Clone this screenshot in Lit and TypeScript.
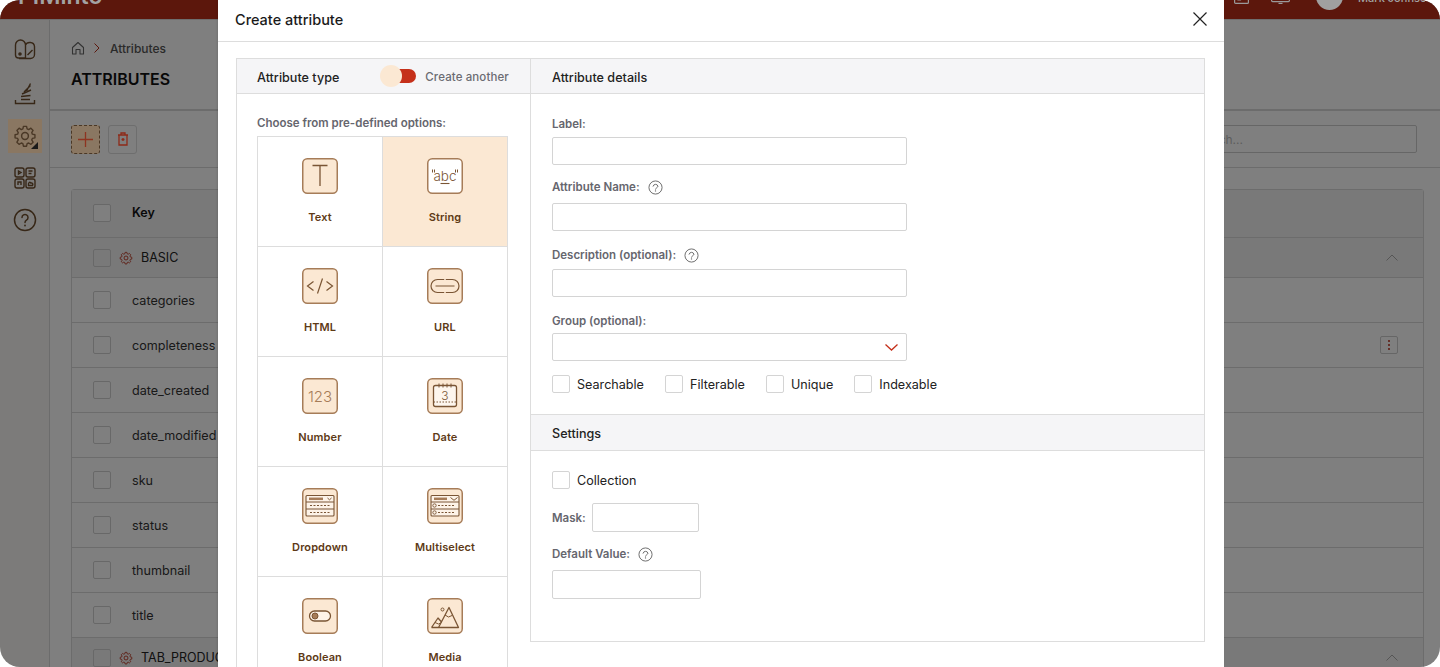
import { LitElement, html, css, svg } from "lit";
import { customElement } from "lit/decorators.js";

const S = "#a67c58";
const D = "#7a5534";
const SIDE = "#4a3826";

const gear = (size: number, color: string) => html`<svg width=${size} height=${size} viewBox="0 0 24 24" fill="none" stroke=${color} stroke-width="1.5" stroke-linejoin="round"><path d="M10.3 2.5h3.4l.6 2.8 1.7.7 2.4-1.5 2.4 2.4-1.5 2.4.7 1.7 2.8.6v3.4l-2.8.6-.7 1.7 1.5 2.4-2.4 2.4-2.4-1.5-1.7.7-.6 2.8h-3.4l-.6-2.8-1.7-.7-2.4 1.5-2.4-2.4 1.5-2.4-.7-1.7-2.8-.6v-3.4l2.8-.6.7-1.7-1.5-2.4 2.4-2.4 2.4 1.5 1.7-.7z" transform="translate(12 12) scale(.92) translate(-12 -13)"/><circle cx="12" cy="12" r="3.4"/></svg>`;

const help = html`<svg class="help" width="15" height="15" viewBox="0 0 16 16" fill="none" stroke="#666" stroke-width="1"><circle cx="8" cy="8" r="7"/><path d="M5.400 6.600a2.700 2.700 0 0 1 5.200 0c0 1.500-2.600 1.700-2.600 3.200" stroke-linecap="round"/><circle cx="8" cy="11.600" r=".7" fill="#666" stroke="none"/></svg>`;

const tileIcons: Record<string, unknown> = {
  text: svg`<path d="M10.500 7.500h15M18 7.500V28" stroke=${D} stroke-width="1.300" fill="none"/>`,
  string: svg`<path d="M5.500 11.500v3M7.500 11.500v3M28.500 11.500v3M30.500 11.500v3" stroke=${D} stroke-width="1"/><text x="18" y="22.500" text-anchor="middle" font-family="Inter, sans-serif" font-size="13.500" font-weight="300" fill=${D}>abc</text><path d="M13.500 25.500h9" stroke=${D} stroke-width="1.100"/>`,
  html: svg`<path d="M11.500 13.500 5.500 18l6 4.500M24.500 13.500l6 4.500-6 4.500M20.500 10.500 15.500 25.500" stroke=${D} stroke-width="1.200" fill="none"/>`,
  url: svg`<path d="M17.200 11.500H10.500a6.500 6.500 0 0 0 0 13h6.700M18.800 11.500h6.700a6.500 6.500 0 0 1 0 13h-6.700M8.500 18h19" stroke=${D} stroke-width="1.200" fill="none"/>`,
  number: svg`<text x="18" y="23.500" text-anchor="middle" font-family="Inter, sans-serif" font-size="15" font-weight="300" fill=${S}>123</text>`,
  date: svg`<rect x="6.500" y="7.500" width="23" height="21" rx="2" fill="#fdf6ee" stroke=${D} stroke-width="1.300"/><path d="M12 5.500v4M16 5.500v4M20 5.500v4M24 5.500v4" stroke=${D} stroke-width="1"/><path d="M6.500 24h23" stroke=${D} stroke-width="1" stroke-dasharray="1.500 1.500"/><text x="18" y="22" text-anchor="middle" font-family="Inter, sans-serif" font-size="12" font-weight="300" fill=${D}>3</text>`,
  dropdown: svg`<rect x="4" y="7.500" width="28" height="20.500" rx="1" fill="#fdf3e8" stroke=${D} stroke-width="1.100"/><path d="M4 14h28M4 21h28" stroke=${D}/><path d="M7 10.800h14" stroke=${S} stroke-width="2.500"/><path d="M25.500 10l2 1.800 2-1.800" stroke=${D} fill="none"/><path d="M8 17.500h20M8 24.500h20" stroke=${D} stroke-width="1" stroke-dasharray="2 1.500"/>`,
  multi: svg`<rect x="4" y="7.500" width="28" height="20.500" rx="1" fill="#fdf3e8" stroke=${D} stroke-width="1.100"/><path d="M4 14h28M4 21h28" stroke=${D}/><path d="M7 10.800h13" stroke=${S} stroke-width="2.500"/><path d="M23.500 9.500l3.500 2.800 3.500-2.800" stroke=${D} fill="none"/><circle cx="7.500" cy="17.500" r="1.700" fill="none" stroke=${D} stroke-width=".9"/><circle cx="7.500" cy="24.500" r="1.700" fill="none" stroke=${D} stroke-width=".9"/><path d="M11 17.500h17M11 24.500h17" stroke=${D} stroke-width="1" stroke-dasharray="2 1.500"/>`,
  boolean: svg`<rect x="7.500" y="13" width="21" height="10" rx="5" fill="#fdf3e8" stroke=${D} stroke-width="1.300"/><circle cx="13" cy="18" r="3" fill=${S} stroke=${D} stroke-width="1"/>`,
  media: svg`<path d="M4.500 29.500l6.500-9.500 3.500 4M11.500 29.500 22 9.500l9.500 20zM4.500 29.500h27" stroke=${D} stroke-width="1.300" fill="none" stroke-linejoin="round"/><path d="M18 17l3.500 2 3.500-1.500M8 24.500l3.500 1.500 3-1.500" stroke=${D} stroke-width="1" fill="none"/><circle cx="15.500" cy="11.500" r="1.500" fill="none" stroke=${D} stroke-width="1"/>`,
};

const tiles = [
  ["text", "Text"], ["string", "String"],
  ["html", "HTML"], ["url", "URL"],
  ["number", "Number"], ["date", "Date"],
  ["dropdown", "Dropdown"], ["multi", "Multiselect"],
  ["boolean", "Boolean"], ["media", "Media"],
];

const rows = [
  ["BASIC", true], ["categories", false], ["completeness", false], ["date_created", false],
  ["date_modified", false], ["sku", false], ["status", false], ["thumbnail", false],
  ["title", false], ["TAB_PRODUCT", true],
] as [string, boolean][];

@customElement("app-root")
export class AppRoot extends LitElement {
  static styles = css`
    :host { display: block; width: 1440px; height: 667px; position: relative; overflow: hidden; background: #fff; font-family: Inter, "Liberation Sans", sans-serif; color: #111; }
    svg { display: block; flex: none; }
    .frame { position: absolute; inset: 0; border-radius: 20px; overflow: hidden; background: #fff; display: flex; flex-direction: column; }
    .overlay { position: absolute; inset: 0; background: rgba(0,0,0,.5); }
    .topbar { flex: none; height: 60px; margin-top: -40px; background: #5c170c; border-bottom: 1px solid #6e6e6e; box-sizing: border-box; color: #a3a3a3; display: flex; align-items: flex-end; padding: 0 15px 0 18px; position: relative; z-index: 1; }
    .logo { font-size: 23px; line-height: 23px; font-weight: 600; margin-bottom: 11px; }
    .topright { margin-left: auto; display: flex; align-items: flex-end; }
    .ticon { margin-bottom: 15px; }
    .ticon.a { margin-right: 22px; }
    .ticon.b { margin-right: 26px; }
    .avatar { width: 27px; height: 27px; border-radius: 50%; background: #a0a0a0; margin: 0 15px 9px 0; }
    .uname { font-size: 11px; line-height: 14px; font-weight: 500; margin-bottom: 14px; width: 67px; white-space: nowrap; overflow: hidden; }
    .under { flex: 1; display: flex; min-height: 0; }
    .side { width: 50px; flex: none; box-sizing: border-box; border-right: 1px solid #d8d8d8; background: #f8f7f4; display: flex; flex-direction: column; align-items: center; padding-top: 13px; }
    .sitem { width: 34px; height: 34px; display: flex; align-items: center; justify-content: center; margin-bottom: 8px; position: relative; }
    .sitem:first-child { margin-bottom: 10px; }
    .sitem.on { background: #8a7762; z-index: 1; }
    .corner { position: absolute; right: 4px; bottom: 4px; width: 0; height: 0; border-left: 7px solid transparent; border-bottom: 7px solid #1a1a1a; }
    .main { flex: 1; min-width: 0; display: flex; flex-direction: column; background: #fff; }
    .head { height: 91px; flex: none; box-sizing: border-box; border-bottom: 2px solid #d8d8d8; padding: 20px 21px 0; }
    .crumb { display: flex; align-items: center; font-size: 12px; font-weight: 500; color: #555; height: 16px; }
    .crumb svg:nth-child(2) { margin: 0 10px 0 9px; }
    .title { font-size: 16px; font-weight: 600; margin-top: 13px; color: #111; }
    .tools { height: 57px; flex: none; box-sizing: border-box; border-bottom: 1px solid #d8d8d8; display: flex; align-items: center; padding: 0 23px 0 21px; }
    .tbtn { width: 29px; height: 29px; box-sizing: border-box; border: 1px solid #6e6e6e; border-radius: 3px; display: flex; align-items: center; justify-content: center; margin-right: 8px; position: relative; z-index: 1; }
    .tbtn.add { border: 1px dashed #4a3826; background: #8a7762; }
    .search { margin-left: auto; width: 700px; height: 28px; box-sizing: border-box; border: 1px solid #ccc; border-radius: 2px; display: flex; align-items: center; justify-content: flex-end; font-size: 12px; color: #bbb; }
    .search span { margin-right: 173px; }
    .table { margin: 21px 16px 0 21px; border: 1px solid #d8d8d8; border-radius: 3px 3px 0 0; }
    .row { height: 45px; box-sizing: border-box; border-bottom: 1px solid #d8d8d8; display: flex; align-items: center; font-size: 12.600px; color: #333; padding-left: 21px; position: relative; }
    .row.hd { height: 48px; background: #f2f2f3; font-weight: 600; color: #111; font-size: 12.500px; padding-bottom: 2px; }
    .row.grp { height: 40px; background: #f2f2f3; color: #222; font-size: 12.500px; }
    .row.grp:last-child { height: 45px; padding-bottom: 5px; }
    .cb { width: 18px; height: 18px; box-sizing: border-box; border: 1px solid #d0d0d0; border-radius: 2px; background: #fff; flex: none; margin-right: 21px; }
    .row.grp .cb { margin-right: 8px; background: transparent; }
    .row.grp svg { margin-right: 8px; }
    .row.grp svg.chev { margin-right: 0; }
    .chev { position: absolute; right: 25px; }
    .keb { position: absolute; right: 25px; width: 18px; height: 18px; box-sizing: border-box; border: 1px solid #ccc; border-radius: 2px; display: flex; align-items: center; justify-content: center; }

    .modal { position: absolute; z-index: 2; left: 218px; top: 0; width: 1006px; height: 667px; background: #fff; overflow: hidden; display: flex; flex-direction: column; box-shadow: -1px 0 2px rgba(0,0,0,.1); }
    .mhead { height: 42px; flex: none; box-sizing: border-box; border-bottom: 1px solid #ddd; display: flex; align-items: center; justify-content: space-between; padding: 0 17px 3px; font-size: 14.500px; font-weight: 500; color: #1a1a1a; }
    .panel { margin: 16px 0 0 18px; width: 969px; display: flex; flex: 1; min-height: 0; border-top: 1px solid #ddd; box-sizing: border-box; }
    .left { width: 294px; flex: none; border-left: 1px solid #ddd; box-sizing: border-box; }
    .right { width: 675px; flex: none; border-left: 1px solid #ddd; border-right: 1px solid #ddd; border-bottom: 1px solid #ddd; height: 583px; box-sizing: border-box; }
    .bar { height: 35px; box-sizing: border-box; background: #f5f5f7; border-bottom: 1px solid #ddd; display: flex; align-items: center; font-size: 12.600px; font-weight: 500; color: #222; padding: 2px 0 0 21px; }
    .left .bar { padding-left: 20px; justify-content: flex-start; }
    .toggle { display: flex; align-items: center; margin: -2px 0 0 41px; }
    .knob { width: 22px; height: 22px; border-radius: 50%; background: #fbe8d3; position: relative; z-index: 1; }
    .track { width: 19px; height: 14px; background: #c5301a; border-radius: 0 7px 7px 0; margin-left: -5px; }
    .another { margin-left: 9px; font-size: 11.500px; font-weight: 500; color: #6b6b72; letter-spacing: .1px; white-space: nowrap; }
    .choose { font-size: 11.500px; font-weight: 600; color: #66666e; margin: 22px 0 6px 20px; line-height: 14px; }
    .grid { margin-left: 20px; width: 251px; display: grid; grid-template-columns: 125px 125px; border-left: 1px solid #ddd; border-top: 1px solid #ddd; box-sizing: border-box; }
    .cell { height: 110px; box-sizing: border-box; border-right: 1px solid #ddd; border-bottom: 1px solid #ddd; display: flex; flex-direction: column; align-items: center; padding-top: 21px; font-size: 11px; font-weight: 600; color: #5e3a16; }
    .cell.sel { background: #fbe8d3; }
    .tile { width: 36px; height: 36px; box-sizing: border-box; }
    .cell span { margin-top: 16px; line-height: 14px; letter-spacing: .1px; }
    .details { padding: 21px 21px 0; height: 320px; box-sizing: border-box; }
    .lab { display: flex; align-items: center; gap: 8px; font-size: 11.500px; font-weight: 600; color: #66666e; line-height: 14px; height: 16px; box-sizing: border-box; padding-top: 2px; }
    .lab.n, .mask .lab { padding-top: 0; }
    .inp { width: 355px; height: 28px; box-sizing: border-box; border: 1px solid #d4d4d4; border-radius: 2px; background: #fff; display: flex; align-items: center; justify-content: flex-end; padding-right: 8px; }
    .f1 { margin: 6px 0 14px; }
    .f2 { margin: 8px 0 15px; }
    .f3 { margin: 7px 0 15px; }
    .f4 { margin: 5px 0 14px; }
    .checks { display: flex; align-items: center; }
    .chk { display: flex; align-items: center; gap: 7px; font-size: 12.600px; color: #222; margin-right: 21px; line-height: 16px; }
    .chk span { padding-top: 2px; }
    .chk i { width: 18px; height: 18px; box-sizing: border-box; border: 1px solid #d4d4d4; border-radius: 2px; display: block; }
    .right .bar.s { border-top: 1px solid #ddd; height: 37px; }
    .settings { padding: 20px 21px 0; }
    .mask { display: flex; align-items: center; gap: 6px; margin: 14px 0 0; }
    .inp.m { width: 107px; height: 29px; }
    .lab.dv { margin-top: 13px; }
    .inp.d { width: 149px; height: 29px; margin-top: 9px; }
  `;

  render() {
    return html`
      <div class="frame">
        <div class="topbar">
          <span class="logo">PIMinto</span>
          <div class="topright">
            <svg class="ticon a" width="15" height="16" viewBox="0 0 15 16" fill="none" stroke="#9a9a9a" stroke-width="1.200"><rect x=".6" y=".6" width="13.800" height="14.800" rx="1"/><path d="M4 8v4h2.500V8M9 12V8"/></svg>
            <svg class="ticon b" width="19" height="16" viewBox="0 0 19 16" fill="none" stroke="#9a9a9a" stroke-width="1.200"><rect x=".6" y=".6" width="17.800" height="13" rx="1"/><path d="M7.500 15.400h4"/></svg>
            <span class="avatar"></span>
            <span class="uname">Mark Johnson</span>
          </div>
        </div>
        <div class="under">
          <div class="side">
            <div class="sitem"><svg width="24" height="24" viewBox="0 0 24 24" fill="none" stroke="#6f4e2e" stroke-width="1.400"><path d="M12.500 20H5.500a3 3 0 0 1-3-3V7a5 5 0 0 1 10 0zM12.500 7c1.500-3.500 8.500-3.500 9 1.500v8a4 4 0 0 1-4 4H6"/><circle cx="7" cy="16" r="1.100" fill="#6f4e2e"/><path d="M14.500 17l5-5"/></svg></div>
            <div class="sitem"><svg width="24" height="24" viewBox="0 0 24 24" fill="none" stroke="#6f4e2e" stroke-width="1.400"><path d="M2.500 18v3.500h19V18M8 17.500h9M8 14.500l9.500-1M9 12l9-4M11 10l6.500-6.500M13.500 9l4-7.500"/></svg></div>
            <div class="sitem on">${gear(24, SIDE)}<span class="corner"></span></div>
            <div class="sitem"><svg width="24" height="24" viewBox="0 0 24 24" fill="none" stroke="#6f4e2e" stroke-width="1.400"><rect x="2" y="2" width="9" height="9" rx="2"/><rect x="13" y="2" width="9" height="9" rx="2"/><rect x="2" y="13" width="9" height="9" rx="2"/><rect x="13" y="13" width="9" height="9" rx="2"/><path d="M5.500 5l2.500 1.500L5.500 8zM15.500 5h4M15.500 7.500h3M5 19v-3h3v3M15.500 19.500h4c1-1.500-.5-3-1.500-2.500-1-1.500-3-.5-2.500 2.500z"/></svg></div>
            <div class="sitem"><svg width="24" height="24" viewBox="0 0 24 24" fill="none" stroke="#6f4e2e" stroke-width="1.500"><circle cx="12" cy="12" r="10.500"/><path d="M9 9.500a3 3 0 1 1 4.500 2.600c-1 .6-1.500 1.200-1.500 2.400" stroke-linecap="round"/><circle cx="12" cy="17.500" r=".9" fill="#6f4e2e" stroke="none"/></svg></div>
          </div>
          <div class="main">
            <div class="head">
              <div class="crumb">
                <svg width="14" height="14" viewBox="0 0 14 14" fill="none" stroke="#666" stroke-width="1.100"><path d="M1.500 6.500 7 1.500l5.500 5V13H9V8.500H5V13H1.500z" stroke-linejoin="round"/></svg>
                <svg width="6" height="10" viewBox="0 0 6 10" fill="none" stroke="#b82e18" stroke-width="1"><path d="M.5.500 5 5 .5 9.500"/></svg>
                <span>Attributes</span>
              </div>
              <div class="title">ATTRIBUTES</div>
            </div>
            <div class="tools">
              <div class="tbtn add"><svg width="15" height="15" viewBox="0 0 15 15" stroke="#8e3420" stroke-width="1.300"><path d="M7.500 0v15M0 7.500h15"/></svg></div>
              <div class="tbtn"><svg width="12" height="14" viewBox="0 0 12 14" fill="none" stroke="#8e2a18" stroke-width="1.300"><path d="M1 3h10M4 3V1h4v2M2 3v10h8V3M4.500 7.500h3M6 6v3"/></svg></div>
              <div class="search"><span>Search...</span></div>
            </div>
            <div class="table">
              <div class="row hd"><span class="cb"></span>Key</div>
              ${rows.map(([n, g]) => html`
                <div class="row ${g ? "grp" : ""}">
                  <span class="cb"></span>
                  ${g ? gear(14, "#b82e18") : ""}
                  ${n}
                  ${g ? html`<svg class="chev" width="12" height="7" viewBox="0 0 12 7" fill="none" stroke="#aaa"><path d="M.5 6.500 6 1l5.500 5.500"/></svg>` : ""}
                  ${n === "completeness" ? html`<span class="keb"><svg width="2" height="10" viewBox="0 0 2 10" fill="#b82e18"><circle cx="1" cy="1" r="1"/><circle cx="1" cy="5" r="1"/><circle cx="1" cy="9" r="1"/></svg></span>` : ""}
                </div>`)}
            </div>
          </div>
        </div>
        <div class="overlay"></div>
      </div>

      <div class="modal">
        <div class="mhead">
          <span>Create attribute</span>
          <svg width="14" height="14" viewBox="0 0 14 14" stroke="#222" stroke-width="1.200"><path d="M.5.500l13 13M13.500.500l-13 13"/></svg>
        </div>
        <div class="panel">
          <div class="left">
            <div class="bar">
              <span>Attribute type</span>
              <span class="toggle"><span class="knob"></span><span class="track"></span></span>
              <span class="another">Create another</span>
            </div>
            <div class="choose">Choose from pre-defined options:</div>
            <div class="grid">
              ${tiles.map(([k, n]) => {
                const sel = k === "string";
                return html`<div class="cell ${sel ? "sel" : ""}">
                  <svg class="tile" viewBox="0 0 36 36" width="36" height="36"><rect x=".75" y=".75" width="34.500" height="34.500" rx="4.500" fill=${sel ? "#fff" : "#fbe8d3"} stroke=${S} stroke-width="1.500"/>${tileIcons[k]}</svg>
                  <span>${n}</span>
                </div>`;
              })}
            </div>
          </div>
          <div class="right">
            <div class="bar">Attribute details</div>
            <div class="details">
              <div class="lab">Label:</div>
              <div class="inp f1"></div>
              <div class="lab n">Attribute Name: ${help}</div>
              <div class="inp f2"></div>
              <div class="lab">Description (optional): ${help}</div>
              <div class="inp f3"></div>
              <div class="lab">Group (optional):</div>
              <div class="inp f4"><svg width="13" height="7" viewBox="0 0 13 7" fill="none" stroke="#c5301a" stroke-width="1.300"><path d="M.5.500l6 5.500 6-5.500"/></svg></div>
              <div class="checks">
                <label class="chk"><i></i><span>Searchable</span></label>
                <label class="chk"><i></i><span>Filterable</span></label>
                <label class="chk"><i></i><span>Unique</span></label>
                <label class="chk"><i></i><span>Indexable</span></label>
              </div>
            </div>
            <div class="bar s">Settings</div>
            <div class="settings">
              <label class="chk"><i></i><span>Collection</span></label>
              <div class="mask"><span class="lab">Mask:</span><span class="inp m"></span></div>
              <div class="lab dv">Default Value: ${help}</div>
              <div class="inp d"></div>
            </div>
          </div>
        </div>
      </div>
    `;
  }
}
